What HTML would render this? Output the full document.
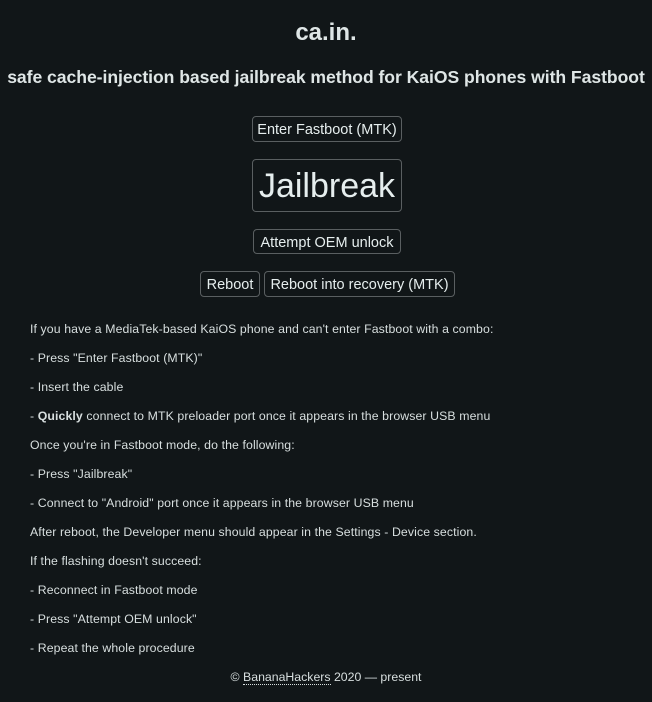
<!DOCTYPE html>
<html><head><meta charset="utf-8"><style>
html,body{margin:0;padding:0;background:#111618;width:652px;height:702px;overflow:hidden;color:#dfe6e6;font-family:"Liberation Sans",sans-serif;}
.a{position:absolute;white-space:nowrap;}
.c{left:0;width:652px;text-align:center;}
.b{position:absolute;box-sizing:border-box;border:1px solid #5a5f61;border-radius:4px;background:#111618;color:#e6eeee;text-align:center;white-space:nowrap;font-size:14.5px;line-height:26px;}
.t{left:30px;font-size:12.3px;letter-spacing:0.1px;color:#d8dfdf;}
</style></head><body>
<div class="a c" style="top:19px;font-size:24px;font-weight:bold;">ca.in.</div>
<div class="a c" style="top:67px;font-size:17.6px;font-weight:bold;letter-spacing:-0.05px;">safe cache-injection based jailbreak method for KaiOS phones with Fastboot</div>
<div class="b" style="left:252px;top:116px;width:150px;height:26px;">Enter Fastboot (MTK)</div>
<div class="b" style="left:252px;top:159px;width:150px;height:53px;font-size:34px;line-height:52px;">Jailbreak</div>
<div class="b" style="left:253px;top:229px;width:148px;height:25px;">Attempt OEM unlock</div>
<div class="b" style="left:200px;top:271px;width:60px;height:26px;">Reboot</div>
<div class="b" style="left:264px;top:271px;width:191px;height:26px;">Reboot into recovery (MTK)</div>
<div class="a t" style="top:322px;">If you have a MediaTek-based KaiOS phone and can't enter Fastboot with a combo:</div>
<div class="a t" style="top:351px;">- Press "Enter Fastboot (MTK)"</div>
<div class="a t" style="top:380px;">- Insert the cable</div>
<div class="a t" style="top:409px;">- <b>Quickly</b> connect to MTK preloader port once it appears in the browser USB menu</div>
<div class="a t" style="top:438px;">Once you're in Fastboot mode, do the following:</div>
<div class="a t" style="top:467px;">- Press "Jailbreak"</div>
<div class="a t" style="top:496px;">- Connect to "Android" port once it appears in the browser USB menu</div>
<div class="a t" style="top:525px;">After reboot, the Developer menu should appear in the Settings - Device section.</div>
<div class="a t" style="top:554px;">If the flashing doesn't succeed:</div>
<div class="a t" style="top:583px;">- Reconnect in Fastboot mode</div>
<div class="a t" style="top:612px;">- Press "Attempt OEM unlock"</div>
<div class="a t" style="top:641px;">- Repeat the whole procedure</div>
<div class="a c" style="top:670px;font-size:12.3px;color:#d8dfdf;">© <span style="border-bottom:1px dotted #d8dfdf;">BananaHackers</span> 2020 — present</div>
</body></html>
